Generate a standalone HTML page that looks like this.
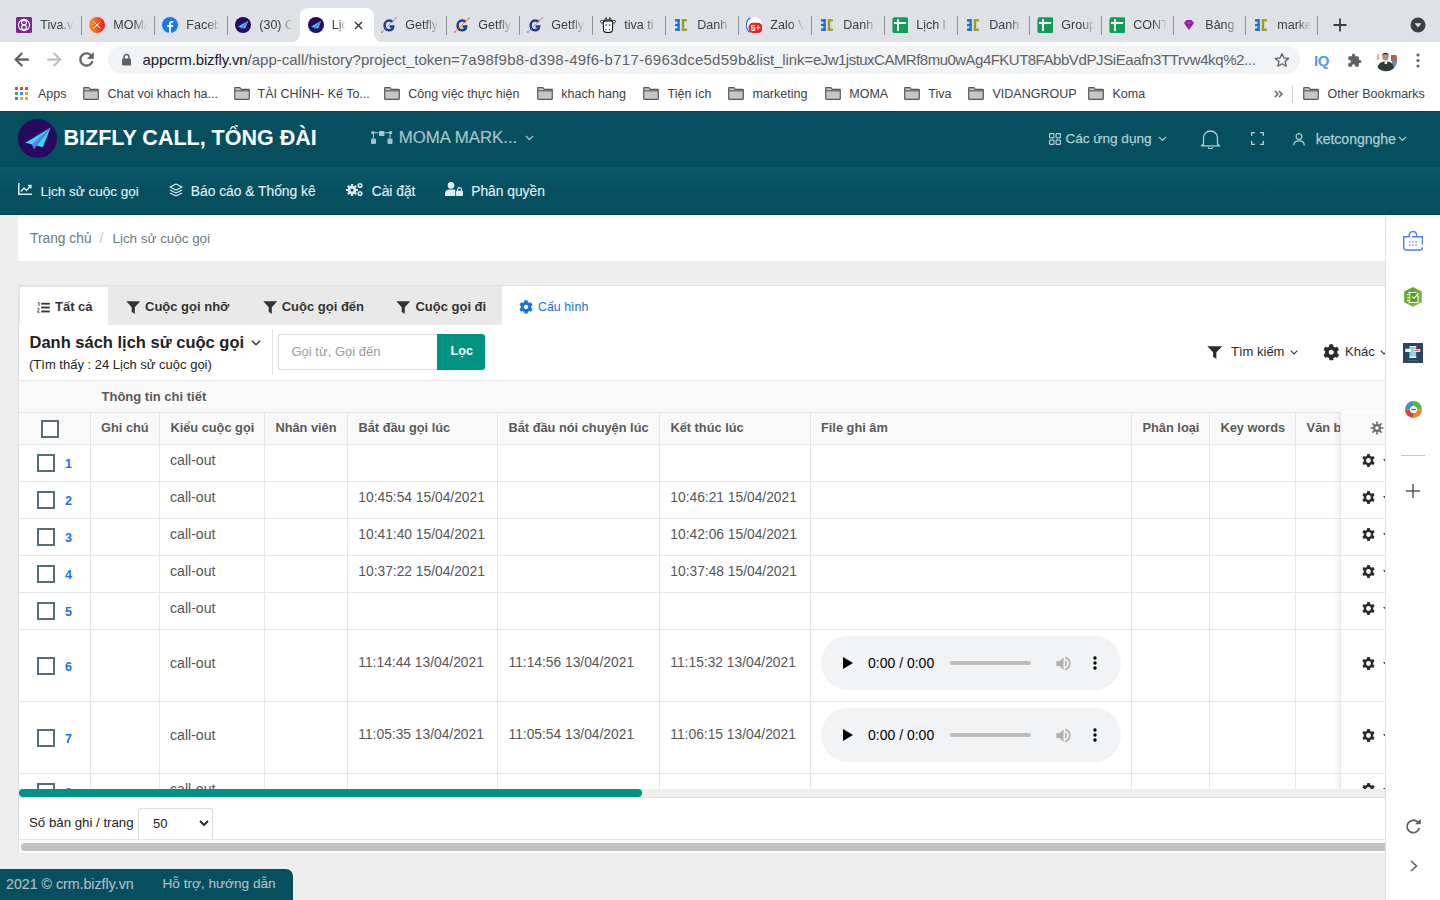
<!DOCTYPE html><html><head><meta charset='utf-8'><title>Lịch sử cuộc gọi</title><style>
*{box-sizing:border-box;margin:0;padding:0}
html,body{width:1440px;height:900px;overflow:hidden;background:#fff;font-family:"Liberation Sans",sans-serif;position:relative}
.abs{position:absolute}
.t{position:absolute;white-space:nowrap;line-height:1}
#tabstrip{position:absolute;left:0;top:0;width:1440px;height:42px;background:#dee1e6}
.tab{position:absolute;top:8px;height:34px;width:73px}
.tab .fav{position:absolute;left:7.6px;top:8.7px;width:16px;height:16px}
.tab .ttl{position:absolute;left:31.8px;top:10px;font-size:12.5px;color:#3c4043;width:34px;overflow:hidden;white-space:nowrap;line-height:15px;
 -webkit-mask-image:linear-gradient(90deg,#000 60%,transparent 100%)}
.tab .sep{position:absolute;right:-0.5px;top:7.5px;width:1px;height:19.5px;background:#8d9094}
#toolbar{position:absolute;left:0;top:42px;width:1440px;height:36px;background:#fff}
#omni{position:absolute;left:108px;top:46px;width:1192px;height:28px;border-radius:14px;background:#f1f3f4}
#bm{position:absolute;left:0;top:78px;width:1440px;height:32px;background:#fff}
.bmi{position:absolute;top:87px;width:16px;height:13px}
.bmt{position:absolute;top:86.7px;font-size:12.5px;color:#3c4043;line-height:15px;white-space:nowrap}
#hdr{position:absolute;left:0;top:111px;width:1440px;height:56px;background:#054f5f;border-top:1px solid #03475a}
#nav{position:absolute;left:0;top:167px;width:1440px;height:48px;background:linear-gradient(180deg,#0f5b69 0px,#0a5666 8px,#054f5f 24px,#054f5f 46px,#03485a 47px)}
.hw{color:#bcd2d6}
#content{position:absolute;left:0;top:215px;width:1386px;height:685px;background:#eeeeee}
#side{position:absolute;left:1385px;top:215px;width:55px;height:685px;background:#fff;border-left:1px solid #e0e0e0}
</style></head><body>
<div id='tabstrip'></div>
<div class='tab' style='left:8.5px;width:73px'><svg class='fav' viewBox='0 0 16 16'><rect width='16' height='16' rx='1.5' fill='#7a2a8e'/><circle cx='8' cy='8' r='5.6' fill='none' stroke='#fff' stroke-width='1.1'/><circle cx='8' cy='5.7' r='2.3' fill='none' stroke='#fff' stroke-width='1.1'/><circle cx='8' cy='10.3' r='2.3' fill='none' stroke='#fff' stroke-width='1.1'/></svg><div class='ttl'>Tiva.v</div><div class='sep'></div></div>
<div class='tab' style='left:81.5px;width:73px'><svg class='fav' viewBox='0 0 16 16'><defs><linearGradient id='mg' x1='0' x2='1'><stop offset='0' stop-color='#f89a1c'/><stop offset='1' stop-color='#ec1c2a'/></linearGradient></defs><circle cx='8' cy='8' r='8' fill='url(#mg)'/><path d='M4.8 4.8 L11.2 11.2 M11.2 4.8 L4.8 11.2' stroke='#fff' stroke-width='1'/></svg><div class='ttl'>MOMA</div><div class='sep'></div></div>
<div class='tab' style='left:154.5px;width:73px'><svg class='fav' viewBox='0 0 16 16'><circle cx='8' cy='8' r='8' fill='#1877f2'/><path d='M8.9 16 V10 H10.8 L11.1 8 H8.9 V6.8 C8.9 6.2 9.1 5.8 10 5.8 H11.2 V4 C10.9 4 10.3 3.9 9.6 3.9 C8 3.9 7 4.9 7 6.6 V8 H5.2 V10 H7 V16 Z' fill='#fff'/></svg><div class='ttl'>Faceb</div><div class='sep'></div></div>
<div class='tab' style='left:227.5px;width:73px'><svg class='fav' viewBox='0 0 39 39'><circle cx='19.5' cy='19.5' r='19.5' fill='#29085f'/><path d='M32.75 8.5 L7.25 23.75 L15.5 25.8 Z' fill='#3ad6f2'/><path d='M32.75 8.5 L18.3 26.6 L24.75 28.25 Z' fill='#3ad6f2'/><path d='M32.75 8.5 L13.6 25.4 L16.6 30.6 L18.4 26.6 Z' fill='#5b7df2'/></svg><div class='ttl'>(30) C</div></div>
<div class='tab' style='left:300px;width:74px;background:#fff;border-radius:8px 8px 0 0'><svg class='fav' viewBox='0 0 39 39'><circle cx='19.5' cy='19.5' r='19.5' fill='#29085f'/><path d='M32.75 8.5 L7.25 23.75 L15.5 25.8 Z' fill='#3ad6f2'/><path d='M32.75 8.5 L18.3 26.6 L24.75 28.25 Z' fill='#3ad6f2'/><path d='M32.75 8.5 L13.6 25.4 L16.6 30.6 L18.4 26.6 Z' fill='#5b7df2'/></svg><div class='ttl' style='width:14px;-webkit-mask-image:linear-gradient(90deg,#000 50%,transparent 100%)'>Lịc</div><svg class='abs' style='left:53.5px;top:13px' width='9' height='9' viewBox='0 0 9 9'><path d='M1 1 L8 8 M8 1 L1 8' stroke='#3c4043' stroke-width='1.5'/></svg></div>
<div class='abs' style='left:292px;top:34px;width:8px;height:8px;background:radial-gradient(circle at 0 0,transparent 7.5px,#fff 8px)'></div>
<div class='abs' style='left:374px;top:34px;width:8px;height:8px;background:radial-gradient(circle at 100% 0,transparent 7.5px,#fff 8px)'></div>
<div class='tab' style='left:373.5px;width:73px'><svg class='fav' viewBox='0 0 16 16'><path d='M11.6 5.2 C10.8 4 9.6 3.6 8.2 3.6 C5.4 3.6 3.6 5.8 3.6 8.6 C3.6 11.4 5.4 13.2 8 13.2 C10.6 13.2 12 11.8 12.2 9.4 H8.6' fill='none' stroke='#1d3f8e' stroke-width='2.5'/><path d='M.6 15.3 L15.3 .8' stroke='#f07a3a' stroke-width='.9'/><circle cx='.9' cy='15' r='.9' fill='#f07a3a'/><circle cx='14.8' cy='1.3' r='.9' fill='#f07a3a'/></svg><div class='ttl'>Getfly</div><div class='sep'></div></div>
<div class='tab' style='left:446.5px;width:73px'><svg class='fav' viewBox='0 0 16 16'><path d='M11.6 5.2 C10.8 4 9.6 3.6 8.2 3.6 C5.4 3.6 3.6 5.8 3.6 8.6 C3.6 11.4 5.4 13.2 8 13.2 C10.6 13.2 12 11.8 12.2 9.4 H8.6' fill='none' stroke='#1d3f8e' stroke-width='2.5'/><path d='M.6 15.3 L15.3 .8' stroke='#f07a3a' stroke-width='.9'/><circle cx='.9' cy='15' r='.9' fill='#f07a3a'/><circle cx='14.8' cy='1.3' r='.9' fill='#f07a3a'/></svg><div class='ttl'>Getfly</div><div class='sep'></div></div>
<div class='tab' style='left:519.5px;width:73px'><svg class='fav' viewBox='0 0 16 16'><path d='M11.6 5.2 C10.8 4 9.6 3.6 8.2 3.6 C5.4 3.6 3.6 5.8 3.6 8.6 C3.6 11.4 5.4 13.2 8 13.2 C10.6 13.2 12 11.8 12.2 9.4 H8.6' fill='none' stroke='#1d3f8e' stroke-width='2.5'/><path d='M.6 15.3 L15.3 .8' stroke='#f07a3a' stroke-width='.9'/><circle cx='.9' cy='15' r='.9' fill='#f07a3a'/><circle cx='14.8' cy='1.3' r='.9' fill='#f07a3a'/></svg><div class='ttl'>Getfly</div><div class='sep'></div></div>
<div class='tab' style='left:592.5px;width:73px'><svg class='fav' viewBox='0 0 16 16'><path d='M5.2 3.5 C5 1.8 5.6 .8 6.3 .6 C6.6 1.6 6.8 2.6 7 3.3 M10.8 3.5 C11 1.8 10.4 .8 9.7 .6 C9.4 1.6 9.2 2.6 9 3.3' fill='#fff' stroke='#111' stroke-width='.9'/><path d='M.3 4.2 C1.5 3 3.5 3.2 4.5 3.8 L3.8 6.2 C2 6.4 .6 5.6 .3 4.2 Z M15.7 4.2 C14.5 3 12.5 3.2 11.5 3.8 L12.2 6.2 C14 6.4 15.4 5.6 15.7 4.2 Z' fill='#fff' stroke='#111' stroke-width='.9'/><path d='M3.2 5 C3.2 3.6 4.5 3 8 3 C11.5 3 12.8 3.6 12.8 5 L12.4 13.4 C12.2 15 11 15.6 8 15.6 C5 15.6 3.8 15 3.6 13.4 Z' fill='#fff' stroke='#111' stroke-width='1.1'/><path d='M3.5 4.4 C5 3.3 11 3.3 12.5 4.4 L12.5 5 C11 4.3 5 4.3 3.5 5 Z' fill='#111'/><rect x='5.6' y='7.4' width='1.3' height='1.3' fill='#111'/><rect x='8.9' y='7.4' width='1.3' height='1.3' fill='#111'/><circle cx='6' cy='12.6' r='.6' fill='#111'/><circle cx='9.6' cy='12.6' r='.6' fill='#111'/></svg><div class='ttl'>tiva ti</div><div class='sep'></div></div>
<div class='tab' style='left:665.5px;width:73px'><svg class='fav' viewBox='0 0 16 16'><g fill='#1670d8'><rect x='2' y='2.2' width='4.7' height='2.4'/><rect x='2' y='6.9' width='4.7' height='2.2'/><rect x='2' y='11.4' width='4.7' height='2.4'/><rect x='4.4' y='2.2' width='2.3' height='11.6'/></g><g fill='#a39a24'><rect x='8.8' y='2.2' width='5.2' height='2.2'/><rect x='8.8' y='11.6' width='5.2' height='2.2'/><rect x='8.8' y='2.2' width='2.4' height='11.6'/></g></svg><div class='ttl'>Danh</div><div class='sep'></div></div>
<div class='tab' style='left:738.5px;width:73px'><svg class='fav' viewBox='0 0 16 16'><rect x='0' y='.3' width='16' height='15.5' rx='6.5' fill='#fff'/><path d='M4.6 .9 C1.4 2.4 .2 5.6 .5 9 C.8 12.4 2.6 14.6 4.2 15.4' fill='none' stroke='#2f6ee8' stroke-width='1.2'/><rect x='2.6' y='5.8' width='13.8' height='10.2' rx='4.4' fill='#dc2a2a'/><text x='9.5' y='14.4' font-size='8.4' font-family='Liberation Sans' font-weight='bold' fill='#fff' text-anchor='middle'>5+</text></svg><div class='ttl'>Zalo V</div><div class='sep'></div></div>
<div class='tab' style='left:811.5px;width:73px'><svg class='fav' viewBox='0 0 16 16'><g fill='#1670d8'><rect x='2' y='2.2' width='4.7' height='2.4'/><rect x='2' y='6.9' width='4.7' height='2.2'/><rect x='2' y='11.4' width='4.7' height='2.4'/><rect x='4.4' y='2.2' width='2.3' height='11.6'/></g><g fill='#a39a24'><rect x='8.8' y='2.2' width='5.2' height='2.2'/><rect x='8.8' y='11.6' width='5.2' height='2.2'/><rect x='8.8' y='2.2' width='2.4' height='11.6'/></g></svg><div class='ttl'>Danh</div><div class='sep'></div></div>
<div class='tab' style='left:884.5px;width:73px'><svg class='fav' viewBox='0 0 16 16'><rect x='.4' y='.2' width='16' height='16' rx='2.2' fill='#0f9d58'/><path d='M2.1 6.1 H14.1 M6 2.3 V14.1' stroke='#fff' stroke-width='2'/></svg><div class='ttl'>Lịch l</div><div class='sep'></div></div>
<div class='tab' style='left:957.5px;width:72px'><svg class='fav' viewBox='0 0 16 16'><g fill='#1670d8'><rect x='2' y='2.2' width='4.7' height='2.4'/><rect x='2' y='6.9' width='4.7' height='2.2'/><rect x='2' y='11.4' width='4.7' height='2.4'/><rect x='4.4' y='2.2' width='2.3' height='11.6'/></g><g fill='#a39a24'><rect x='8.8' y='2.2' width='5.2' height='2.2'/><rect x='8.8' y='11.6' width='5.2' height='2.2'/><rect x='8.8' y='2.2' width='2.4' height='11.6'/></g></svg><div class='ttl'>Danh</div><div class='sep'></div></div>
<div class='tab' style='left:1029.5px;width:72px'><svg class='fav' viewBox='0 0 16 16'><rect x='.4' y='.2' width='16' height='16' rx='2.2' fill='#0f9d58'/><path d='M2.1 6.1 H14.1 M6 2.3 V14.1' stroke='#fff' stroke-width='2'/></svg><div class='ttl'>Group</div><div class='sep'></div></div>
<div class='tab' style='left:1101.5px;width:72px'><svg class='fav' viewBox='0 0 16 16'><rect x='.4' y='.2' width='16' height='16' rx='2.2' fill='#0f9d58'/><path d='M2.1 6.1 H14.1 M6 2.3 V14.1' stroke='#fff' stroke-width='2'/></svg><div class='ttl'>CONT</div><div class='sep'></div></div>
<div class='tab' style='left:1173.5px;width:72px'><svg class='fav' viewBox='0 0 16 16'><path d='M3 6 L5.5 3 H10.5 L13 6 L8 13 Z' fill='#8e1b9e'/><path d='M3 6 H13 M5.5 3 L8 6 L10.5 3 M8 6 L8 13' stroke='#c34fd0' stroke-width='.6' fill='none'/></svg><div class='ttl'>Bảng</div><div class='sep'></div></div>
<div class='tab' style='left:1245.5px;width:72px'><svg class='fav' viewBox='0 0 16 16'><g fill='#1670d8'><rect x='2' y='2.2' width='4.7' height='2.4'/><rect x='2' y='6.9' width='4.7' height='2.2'/><rect x='2' y='11.4' width='4.7' height='2.4'/><rect x='4.4' y='2.2' width='2.3' height='11.6'/></g><g fill='#a39a24'><rect x='8.8' y='2.2' width='5.2' height='2.2'/><rect x='8.8' y='11.6' width='5.2' height='2.2'/><rect x='8.8' y='2.2' width='2.4' height='11.6'/></g></svg><div class='ttl'>marke</div><div class='sep'></div></div>
<svg class='abs' style='left:1333px;top:18px' width='14' height='14' viewBox='0 0 14 14'><path d='M7 0.5 V13.5 M0.5 7 H13.5' stroke='#3c4043' stroke-width='1.8'/></svg>
<svg class='abs' style='left:1410px;top:17px' width='16' height='16' viewBox='0 0 16 16'><circle cx='8' cy='8' r='7.5' fill='#3c4043'/><path d='M4.6 6.3 H11.4 L8 10.4 Z' fill='#dee1e6'/></svg>
<div id='toolbar'></div>
<svg class='abs' style='left:11.4px;top:48.9px' width='21' height='21' viewBox='0 0 24 24'><path d='M20 11H7.83l5.59-5.59L12 4l-8 8 8 8 1.41-1.41L7.83 13H20v-2z' fill='#5f6368' stroke='#5f6368' stroke-width='.7' stroke-linejoin='round'/></svg>
<svg class='abs' style='left:43.5px;top:48.9px' width='21' height='21' viewBox='0 0 24 24'><path d='M12 4l-1.41 1.41L16.17 11H4v2h12.17l-5.58 5.59L12 20l8-8z' fill='#bdc1c6' stroke='#bdc1c6' stroke-width='.7' stroke-linejoin='round'/></svg>
<svg class='abs' style='left:75.5px;top:48.9px' width='21' height='21' viewBox='0 0 24 24'><path stroke='#5f6368' stroke-width='.6' d='M17.65 6.35C16.2 4.9 14.21 4 12 4c-4.42 0-7.99 3.58-7.99 8s3.57 8 7.99 8c3.73 0 6.840-2.55 7.73-6h-2.08c-.82 2.33-3.04 4-5.65 4-3.31 0-6-2.69-6-6s2.69-6 6-6c1.66 0 3.14.69 4.22 1.78L13 11h7V4l-2.35 2.35z' fill='#5f6368'/></svg>
<div id='omni'></div>
<svg class='abs' style='left:122px;top:53px' width='9' height='13' viewBox='0 0 9 13'><path d='M2 6 V4 A2.5 2.5 0 0 1 7 4 V6' fill='none' stroke='#5f6368' stroke-width='1.5'/><rect x='0' y='5.5' width='9' height='7' rx='1' fill='#5f6368'/></svg>
<div class='t' style='left:142.5px;top:51.2px;font-size:15px;line-height:17px;width:1140px;overflow:hidden;color:#5f6368;letter-spacing:-0.14px'><span style='color:#202124'>appcrm.bizfly.vn</span><span style='letter-spacing:0'>/app-call/history?project_token=</span><span style='letter-spacing:.25px'>7a98f9b8-d398-49f6-b717-6963dce5d59b</span>&amp;list_link=<span style='letter-spacing:-.52px'>eJw1jstuxCAMRf8mu0wAg4FKUT8FA</span><span style='letter-spacing:-.385px'>bbVdPJSiEaafn3TTrvw4kq%2...</span></div>
<svg class='abs' style='left:1274px;top:52px' width='16' height='16' viewBox='0 0 24 24'><path d='M12 2.5 L14.9 9 L22 9.6 L16.6 14.3 L18.2 21.3 L12 17.6 L5.8 21.3 L7.4 14.3 L2 9.6 L9.1 9 Z' fill='none' stroke='#5f6368' stroke-width='2' stroke-linejoin='round'/></svg>
<div class='t' style='left:1314px;top:53px;font-size:15px;font-weight:bold;color:#4a9fe0;letter-spacing:-0.5px'>IQ</div>
<svg class='abs' style='left:1347px;top:53px' width='15' height='15' viewBox='0 0 24 24'><path d='M20.5 11H19V7c0-1.1-.9-2-2-2h-4V3.5C13 2.12 11.88 1 10.5 1S8 2.12 8 3.5V5H4c-1.1 0-1.99.9-1.99 2v3.8H3.5c1.49 0 2.7 1.21 2.7 2.7s-1.21 2.7-2.7 2.7H2V20c0 1.1.9 2 2 2h3.8v-1.5c0-1.49 1.21-2.7 2.7-2.7 1.49 0 2.7 1.21 2.7 2.7V22H17c1.1 0 2-.9 2-2v-4h1.5c1.38 0 2.5-1.12 2.5-2.5S21.88 11 20.5 11z' fill='#5f6368'/></svg>
<svg class='abs' style='left:1374px;top:48px' width='24' height='24' viewBox='0 0 24 24'><defs><clipPath id='av'><circle cx='12' cy='12' r='11.2'/></clipPath></defs><g clip-path='url(#av)'><rect width='24' height='24' fill='#fbfbfb'/><rect x='17' y='7' width='6' height='6' fill='#9a6a5c'/><rect x='18' y='13' width='5' height='8' fill='#6f8aa6'/><rect x='3' y='6' width='2' height='6' fill='#cfc08a'/><path d='M3 24 C3 16 6 13.5 12 13.5 C18 13.5 20 16 20 24 Z' fill='#2f3b3a'/><rect x='10.6' y='13' width='2.6' height='3' fill='#e8e8e4'/><ellipse cx='11.5' cy='8.6' rx='3.2' ry='4' fill='#b88d72'/><path d='M8.2 7.4 C8.2 4.4 14.8 4.2 14.8 7.4 C13.5 6 9.5 6 8.2 7.4 Z' fill='#2b2b2b'/></g></svg>
<svg class='abs' style='left:1416px;top:53px' width='4' height='15' viewBox='0 0 4 15'><circle cx='2' cy='2' r='1.6' fill='#5f6368'/><circle cx='2' cy='7.5' r='1.6' fill='#5f6368'/><circle cx='2' cy='13' r='1.6' fill='#5f6368'/></svg>
<div id='bm'></div>
<svg class='abs' style='left:15px;top:87px' width='13' height='13' viewBox='0 0 13 13'><rect x='0' y='0' width='3' height='3' fill='#ea4335'/><rect x='5' y='0' width='3' height='3' fill='#ea4335'/><rect x='10' y='0' width='3' height='3' fill='#ea4335'/><rect x='0' y='5' width='3' height='3' fill='#34a853'/><rect x='5' y='5' width='3' height='3' fill='#4285f4'/><rect x='10' y='5' width='3' height='3' fill='#f4a024'/><rect x='0' y='10' width='3' height='3' fill='#34a853'/><rect x='5' y='10' width='3' height='3' fill='#f4a024'/><rect x='10' y='10' width='3' height='3' fill='#f4a024'/></svg>
<div class='bmt' style='left:38px'>Apps</div>
<svg class='bmi' style='left:83px' viewBox='0 0 16 13'><path d='M0.7 1.2 C0.7 0.9 0.9 0.7 1.2 0.7 H5.8 L7.3 2.3 H14.8 C15.1 2.3 15.3 2.5 15.3 2.8 V11.8 C15.3 12.1 15.1 12.3 14.8 12.3 H1.2 C0.9 12.3 0.7 12.1 0.7 11.8 Z' fill='#c6c6c6' stroke='#5a5a5a' stroke-width='1.2'/><path d='M0.7 3.8 H15.3' stroke='#5a5a5a' stroke-width='1.1'/></svg>
<div class='bmt' style='left:107.5px'>Chat voi khach ha...</div>
<svg class='bmi' style='left:233.75px' viewBox='0 0 16 13'><path d='M0.7 1.2 C0.7 0.9 0.9 0.7 1.2 0.7 H5.8 L7.3 2.3 H14.8 C15.1 2.3 15.3 2.5 15.3 2.8 V11.8 C15.3 12.1 15.1 12.3 14.8 12.3 H1.2 C0.9 12.3 0.7 12.1 0.7 11.8 Z' fill='#c6c6c6' stroke='#5a5a5a' stroke-width='1.2'/><path d='M0.7 3.8 H15.3' stroke='#5a5a5a' stroke-width='1.1'/></svg>
<div class='bmt' style='left:257.5px'>TÀI CHÍNH- Kế To...</div>
<svg class='bmi' style='left:383.75px' viewBox='0 0 16 13'><path d='M0.7 1.2 C0.7 0.9 0.9 0.7 1.2 0.7 H5.8 L7.3 2.3 H14.8 C15.1 2.3 15.3 2.5 15.3 2.8 V11.8 C15.3 12.1 15.1 12.3 14.8 12.3 H1.2 C0.9 12.3 0.7 12.1 0.7 11.8 Z' fill='#c6c6c6' stroke='#5a5a5a' stroke-width='1.2'/><path d='M0.7 3.8 H15.3' stroke='#5a5a5a' stroke-width='1.1'/></svg>
<div class='bmt' style='left:408.25px'>Công việc thực hiện</div>
<svg class='bmi' style='left:537px' viewBox='0 0 16 13'><path d='M0.7 1.2 C0.7 0.9 0.9 0.7 1.2 0.7 H5.8 L7.3 2.3 H14.8 C15.1 2.3 15.3 2.5 15.3 2.8 V11.8 C15.3 12.1 15.1 12.3 14.8 12.3 H1.2 C0.9 12.3 0.7 12.1 0.7 11.8 Z' fill='#c6c6c6' stroke='#5a5a5a' stroke-width='1.2'/><path d='M0.7 3.8 H15.3' stroke='#5a5a5a' stroke-width='1.1'/></svg>
<div class='bmt' style='left:561.25px'>khach hang</div>
<svg class='bmi' style='left:643px' viewBox='0 0 16 13'><path d='M0.7 1.2 C0.7 0.9 0.9 0.7 1.2 0.7 H5.8 L7.3 2.3 H14.8 C15.1 2.3 15.3 2.5 15.3 2.8 V11.8 C15.3 12.1 15.1 12.3 14.8 12.3 H1.2 C0.9 12.3 0.7 12.1 0.7 11.8 Z' fill='#c6c6c6' stroke='#5a5a5a' stroke-width='1.2'/><path d='M0.7 3.8 H15.3' stroke='#5a5a5a' stroke-width='1.1'/></svg>
<div class='bmt' style='left:667.5px'>Tiện ích</div>
<svg class='bmi' style='left:728px' viewBox='0 0 16 13'><path d='M0.7 1.2 C0.7 0.9 0.9 0.7 1.2 0.7 H5.8 L7.3 2.3 H14.8 C15.1 2.3 15.3 2.5 15.3 2.8 V11.8 C15.3 12.1 15.1 12.3 14.8 12.3 H1.2 C0.9 12.3 0.7 12.1 0.7 11.8 Z' fill='#c6c6c6' stroke='#5a5a5a' stroke-width='1.2'/><path d='M0.7 3.8 H15.3' stroke='#5a5a5a' stroke-width='1.1'/></svg>
<div class='bmt' style='left:752.5px'>marketing</div>
<svg class='bmi' style='left:825px' viewBox='0 0 16 13'><path d='M0.7 1.2 C0.7 0.9 0.9 0.7 1.2 0.7 H5.8 L7.3 2.3 H14.8 C15.1 2.3 15.3 2.5 15.3 2.8 V11.8 C15.3 12.1 15.1 12.3 14.8 12.3 H1.2 C0.9 12.3 0.7 12.1 0.7 11.8 Z' fill='#c6c6c6' stroke='#5a5a5a' stroke-width='1.2'/><path d='M0.7 3.8 H15.3' stroke='#5a5a5a' stroke-width='1.1'/></svg>
<div class='bmt' style='left:849.25px'>MOMA</div>
<svg class='bmi' style='left:904.25px' viewBox='0 0 16 13'><path d='M0.7 1.2 C0.7 0.9 0.9 0.7 1.2 0.7 H5.8 L7.3 2.3 H14.8 C15.1 2.3 15.3 2.5 15.3 2.8 V11.8 C15.3 12.1 15.1 12.3 14.8 12.3 H1.2 C0.9 12.3 0.7 12.1 0.7 11.8 Z' fill='#c6c6c6' stroke='#5a5a5a' stroke-width='1.2'/><path d='M0.7 3.8 H15.3' stroke='#5a5a5a' stroke-width='1.1'/></svg>
<div class='bmt' style='left:928.25px'>Tiva</div>
<svg class='bmi' style='left:968.25px' viewBox='0 0 16 13'><path d='M0.7 1.2 C0.7 0.9 0.9 0.7 1.2 0.7 H5.8 L7.3 2.3 H14.8 C15.1 2.3 15.3 2.5 15.3 2.8 V11.8 C15.3 12.1 15.1 12.3 14.8 12.3 H1.2 C0.9 12.3 0.7 12.1 0.7 11.8 Z' fill='#c6c6c6' stroke='#5a5a5a' stroke-width='1.2'/><path d='M0.7 3.8 H15.3' stroke='#5a5a5a' stroke-width='1.1'/></svg>
<div class='bmt' style='left:992.5px'>VIDANGROUP</div>
<svg class='bmi' style='left:1088px' viewBox='0 0 16 13'><path d='M0.7 1.2 C0.7 0.9 0.9 0.7 1.2 0.7 H5.8 L7.3 2.3 H14.8 C15.1 2.3 15.3 2.5 15.3 2.8 V11.8 C15.3 12.1 15.1 12.3 14.8 12.3 H1.2 C0.9 12.3 0.7 12.1 0.7 11.8 Z' fill='#c6c6c6' stroke='#5a5a5a' stroke-width='1.2'/><path d='M0.7 3.8 H15.3' stroke='#5a5a5a' stroke-width='1.1'/></svg>
<div class='bmt' style='left:1112.5px'>Koma</div>
<svg class='bmi' style='left:1303px' viewBox='0 0 16 13'><path d='M0.7 1.2 C0.7 0.9 0.9 0.7 1.2 0.7 H5.8 L7.3 2.3 H14.8 C15.1 2.3 15.3 2.5 15.3 2.8 V11.8 C15.3 12.1 15.1 12.3 14.8 12.3 H1.2 C0.9 12.3 0.7 12.1 0.7 11.8 Z' fill='#c6c6c6' stroke='#5a5a5a' stroke-width='1.2'/><path d='M0.7 3.8 H15.3' stroke='#5a5a5a' stroke-width='1.1'/></svg>
<div class='bmt' style='left:1327.5px'>Other Bookmarks</div>
<svg class='abs' style='left:1274px;top:90px' width='9' height='8' viewBox='0 0 9 8'><path d='M1 1 L4 4 L1 7 M5 1 L8 4 L5 7' fill='none' stroke='#5f6368' stroke-width='1.5'/></svg>
<div class='abs' style='left:1292px;top:86px;width:1px;height:17px;background:#ccc'></div>
<div id='hdr'></div><div id='nav'></div>
<svg class='abs' style='left:18px;top:118.5px' width='39' height='39' viewBox='0 0 39 39'><circle cx='19.5' cy='19.5' r='19.5' fill='#29085f'/><path d='M32.75 8.5 L7.25 23.75 L15.5 25.8 Z' fill='#3ad6f2'/><path d='M32.75 8.5 L18.3 26.6 L24.75 28.25 Z' fill='#3ad6f2'/><path d='M32.75 8.5 L13.6 25.4 L16.6 30.6 L18.4 26.6 Z' fill='#5b7df2'/></svg>
<div class='t' style='left:63.5px;top:125.8px;font-size:21.5px;font-weight:bold;color:#fff;line-height:24px'>BIZFLY CALL, TỔNG ĐÀI</div>
<svg class='abs' style='left:370.5px;top:131px' width='22' height='13' viewBox='0 0 22 13'><g fill='#a9c4c9'><rect x='0' y='7.5' width='5' height='5.5' rx='1'/><rect x='16.5' y='7.5' width='5' height='5.5' rx='1'/><rect x='8' y='0' width='5.5' height='5' rx='1'/><circle cx='2' cy='1.8' r='1.8'/><circle cx='19.5' cy='1.8' r='1.8'/></g><path d='M3.5 1.8 H7.5 M14 1.8 H18 M2.5 3.5 V7 M19 3.5 V7' stroke='#a9c4c9' stroke-width='1.1' fill='none'/></svg>
<div class='t' style='left:398.8px;top:128px;font-size:16.8px;color:#a9c4c9;line-height:19px;-webkit-text-stroke:.2px #a9c4c9'>MOMA MARK...</div>
<svg class='abs' style='left:525px;top:135px' width='9' height='6' viewBox='0 0 9 6'><path d='M1 1 L4.5 4.5 L8 1' fill='none' stroke='#a9c4c9' stroke-width='1.3'/></svg>
<svg class='abs' style='left:1048.5px;top:133px' width='12' height='12' viewBox='0 0 12 12'><g fill='none' stroke='#b3cdd1' stroke-width='1.2'><rect x='.6' y='.6' width='4.3' height='4.3' rx='.6'/><rect x='7.1' y='.6' width='4.3' height='4.3' rx='.6'/><rect x='.6' y='7.1' width='4.3' height='4.3' rx='.6'/><rect x='7.1' y='7.1' width='4.3' height='4.3' rx='.6'/></g></svg>
<div class='t' style='left:1065.4px;top:131px;font-size:13.6px;color:#b3cdd1;line-height:16px;-webkit-text-stroke:.25px #b3cdd1'>Các ứng dụng</div>
<svg class='abs' style='left:1158px;top:136px' width='9' height='6' viewBox='0 0 9 6'><path d='M1 1 L4.5 4.5 L8 1' fill='none' stroke='#b3cdd1' stroke-width='1.2'/></svg>
<svg class='abs' style='left:1199.5px;top:129px' width='21' height='20' viewBox='0 0 21 20'><path d='M3.5 15.2 V9 A7 7 0 0 1 17.5 9 V15.2 L19.6 16.8 H1.4 Z' fill='none' stroke='#b3cdd1' stroke-width='1.3' stroke-linejoin='round'/><path d='M8.5 18.2 A2 1.6 0 0 0 12.5 18.2' fill='none' stroke='#b3cdd1' stroke-width='1.3'/></svg>
<svg class='abs' style='left:1251px;top:131.5px' width='13' height='13' viewBox='0 0 13 13'><path d='M.7 4 V.7 H4 M9 .7 H12.3 V4 M12.3 9 V12.3 H9 M4 12.3 H.7 V9' fill='none' stroke='#b3cdd1' stroke-width='1.3'/></svg>
<svg class='abs' style='left:1292.5px;top:132.5px' width='12' height='13' viewBox='0 0 12 13'><circle cx='6' cy='3.5' r='2.9' fill='none' stroke='#b3cdd1' stroke-width='1.2'/><path d='M.7 12.6 C.7 9 3 7.8 6 7.8 C9 7.8 11.3 9 11.3 12.6' fill='none' stroke='#b3cdd1' stroke-width='1.2'/></svg>
<div class='t' style='left:1315.7px;top:131px;font-size:14px;color:#b3cdd1;line-height:16px;-webkit-text-stroke:.25px #b3cdd1'>ketcongnghe</div>
<svg class='abs' style='left:1398px;top:136px' width='9' height='6' viewBox='0 0 9 6'><path d='M1 1 L4.5 4.5 L8 1' fill='none' stroke='#b3cdd1' stroke-width='1.2'/></svg>
<svg class='abs' style='left:17.5px;top:183px' width='14' height='12' viewBox='0 0 14 12'><path d='M.8 0 V11.2 H14' fill='none' stroke='#dfeaec' stroke-width='1.5'/><path d='M3 8.5 L6 5 L8.5 7.5 L12.5 3' fill='none' stroke='#dfeaec' stroke-width='1.5'/><path d='M10 2.5 H13 V5.5' fill='none' stroke='#dfeaec' stroke-width='1.4'/></svg>
<div class='t' style='left:40.4px;top:183.5px;font-size:13.5px;color:#dfeaec;line-height:16px;-webkit-text-stroke:.2px #dfeaec'>Lịch sử cuộc gọi</div>
<svg class='abs' style='left:168.5px;top:182.5px' width='14' height='14' viewBox='0 0 14 14'><g fill='none' stroke='#dfeaec' stroke-width='1.2' stroke-linejoin='round'><path d='M7 1 L13 4 L7 7 L1 4 Z'/><path d='M1 7 L7 10 L13 7'/><path d='M1 10 L7 13 L13 10'/></g></svg>
<div class='t' style='left:190.8px;top:183.5px;font-size:13.8px;color:#dfeaec;line-height:16px;-webkit-text-stroke:.2px #dfeaec'>Báo cáo &amp; Thống kê</div>
<svg class='abs' style='left:345.5px;top:182px' width='18' height='15' viewBox='0 0 18 15'><g fill='#dfeaec'><circle cx='6' cy='8' r='4.3'/><g stroke='#dfeaec' stroke-width='2.2'><path d='M6 2 V14 M0 8 H12 M1.8 3.8 L10.2 12.2 M10.2 3.8 L1.8 12.2'/></g><circle cx='14' cy='3.5' r='2.6'/><circle cx='14' cy='11.5' r='2.6'/></g><circle cx='6' cy='8' r='1.6' fill='#06505f'/><circle cx='14' cy='3.5' r='1' fill='#06505f'/><circle cx='14' cy='11.5' r='1' fill='#06505f'/></svg>
<div class='t' style='left:371.7px;top:183.5px;font-size:13.8px;color:#dfeaec;line-height:16px;-webkit-text-stroke:.2px #dfeaec'>Cài đặt</div>
<svg class='abs' style='left:445px;top:182px' width='18' height='14' viewBox='0 0 18 14'><g fill='#dfeaec'><circle cx='6' cy='3.4' r='3.3'/><path d='M0 14 V11.5 C0 9 2 7.6 4.5 7.6 H8.5 C9.2 7.6 9.8 7.7 10.3 8 V14 Z'/><rect x='11' y='8.8' width='7' height='5.2' rx='.8'/></g><path d='M12.6 9 V7.6 A1.9 1.9 0 0 1 16.4 7.6 V9' fill='none' stroke='#dfeaec' stroke-width='1.2'/></svg>
<div class='t' style='left:471.2px;top:183.5px;font-size:13.8px;color:#dfeaec;line-height:16px;-webkit-text-stroke:.2px #dfeaec'>Phân quyền</div>
<div id='content'></div>
<div class='abs' style='left:18px;top:215px;width:1368px;height:45.5px;background:#fff;border-radius:0 0 0 3px'></div>
<div class='t' style='left:30px;top:231px;font-size:13.8px;color:#6c7a80;line-height:16px'>Trang chủ</div>
<div class='t' style='left:99.5px;top:231px;font-size:13.8px;color:#c3c9cc;line-height:16px'>/</div>
<div class='t' style='left:112.5px;top:231px;font-size:13.4px;color:#6c7a80;line-height:16px'>Lịch sử cuộc gọi</div>
<div class='abs' style='left:18px;top:285px;width:1368px;height:568px;background:#fff;border:1px solid #dedede;border-right:none'></div>
<div class='abs' style='left:19px;top:286px;width:483px;height:38.5px;background:#e9e9e9'></div>
<div class='abs' style='left:20px;top:287px;width:88px;height:38px;background:#fff;border-radius:3px 3px 0 0'></div>
<svg class='abs' style='left:36.5px;top:301.5px' width='13' height='11' viewBox='0 0 13 11'><path d='M1.2 .6 L2 .2 V4' stroke='#333' stroke-width='.9' fill='none'/><path d='M.4 7 C.6 6 2.4 6 2.2 7.2 L.4 10.2 H2.6' stroke='#333' stroke-width='.9' fill='none'/><rect x='4.2' y='.8' width='8.6' height='1.8' fill='#333'/><rect x='4.2' y='4.6' width='8.6' height='1.8' fill='#333'/><rect x='4.2' y='8.6' width='8.6' height='1.8' fill='#333'/></svg>
<div class='t' style='left:55px;top:299px;font-size:13px;font-weight:bold;color:#333;line-height:15px'>Tất cả</div>
<svg class='abs' style='left:125.8px;top:301px' width='14.5' height='13' viewBox='0 0 14.5 13'><path d='M.3 .3 H14.2 L8.8 6.2 V12.7 L5.7 11 V6.2 Z' fill='#333'/></svg>
<div class='t' style='left:145px;top:299px;font-size:13px;font-weight:bold;color:#333;line-height:15px'>Cuộc gọi nhỡ</div>
<svg class='abs' style='left:262.5px;top:301px' width='14.5' height='13' viewBox='0 0 14.5 13'><path d='M.3 .3 H14.2 L8.8 6.2 V12.7 L5.7 11 V6.2 Z' fill='#333'/></svg>
<div class='t' style='left:281.7px;top:299px;font-size:13px;font-weight:bold;color:#333;line-height:15px'>Cuộc gọi đến</div>
<svg class='abs' style='left:395.8px;top:301px' width='14.5' height='13' viewBox='0 0 14.5 13'><path d='M.3 .3 H14.2 L8.8 6.2 V12.7 L5.7 11 V6.2 Z' fill='#333'/></svg>
<div class='t' style='left:415.4px;top:299px;font-size:13px;font-weight:bold;color:#333;line-height:15px'>Cuộc gọi đi</div>
<svg class='abs' style='left:519px;top:300px' width='14' height='14' viewBox='0 0 512 512'><path fill='#1a73d2' d='M487.4 315.7l-42.6-24.6c4.3-23.2 4.3-47 0-70.2l42.6-24.6c4.9-2.8 7.1-8.6 5.5-14-11.1-35.6-30-67.8-54.7-94.6-3.8-4.1-10-5.1-14.8-2.3L380.8 110c-17.9-15.4-38.5-27.3-60.8-35.1V25.8c0-5.6-3.9-10.5-9.4-11.7-36.7-8.2-74.3-7.8-109.2 0-5.5 1.2-9.4 6.1-9.4 11.7V75c-22.2 7.9-42.8 19.8-60.8 35.1L88.7 85.5c-4.9-2.8-11-1.9-14.8 2.3-24.7 26.7-43.6 58.9-54.7 94.6-1.7 5.4.6 11.2 5.5 14L67.3 221c-4.3 23.2-4.3 47 0 70.2l-42.6 24.6c-4.9 2.8-7.1 8.6-5.5 14 11.1 35.6 30 67.8 54.7 94.6 3.8 4.1 10 5.1 14.8 2.3l42.6-24.6c17.9 15.4 38.5 27.3 60.8 35.1v49.2c0 5.6 3.9 10.5 9.4 11.7 36.7 8.2 74.3 7.8 109.2 0 5.5-1.2 9.4-6.1 9.4-11.7v-49.2c22.2-7.9 42.8-19.8 60.8-35.1l42.6 24.6c4.9 2.8 11 1.9 14.8-2.3 24.7-26.7 43.6-58.9 54.7-94.6 1.5-5.5-.7-11.3-5.6-14.1zM256 336c-44.1 0-80-35.9-80-80s35.9-80 80-80 80 35.9 80 80-35.9 80-80 80z'/></svg>
<div class='t' style='left:538px;top:299.5px;font-size:12.4px;color:#1a73d2;line-height:15px'>Cấu hình</div>
<div class='t' style='left:29.5px;top:333px;font-size:16.5px;font-weight:bold;color:#222;line-height:19px'>Danh sách lịch sử cuộc gọi</div>
<svg class='abs' style='left:250.5px;top:340px' width='10' height='6' viewBox='0 0 10 6'><path d='M1 .8 L5 4.8 L9 .8' fill='none' stroke='#333' stroke-width='1.5'/></svg>
<div class='t' style='left:29px;top:357px;font-size:13px;color:#222;line-height:15px'>(Tìm thấy : 24 Lịch sử cuộc gọi)</div>
<div class='abs' style='left:272px;top:329px;width:1px;height:46px;background:#e3e3e3'></div>
<div class='abs' style='left:278px;top:334px;width:160px;height:36px;border:1px solid #d9d9d9;border-right:none;border-radius:3px 0 0 3px;background:#fff'></div>
<div class='t' style='left:291.5px;top:344px;font-size:13px;color:#9a9a9a;line-height:15px'>Gọi từ, Gọi đến</div>
<div class='abs' style='left:437px;top:334px;width:48px;height:36px;background:#009384;border-radius:0 3px 3px 0'></div>
<div class='t' style='left:450.5px;top:344.3px;font-size:12.6px;font-weight:bold;color:#fff;line-height:15px'>Lọc</div>
<svg class='abs' style='left:1206.5px;top:345.5px' width='15.5' height='13' viewBox='0 0 15.5 13'><path d='M.3 .3 H15.2 L9.4 6.3 V12.7 L6.1 11 V6.3 Z' fill='#2b2b2b'/></svg>
<div class='t' style='left:1231px;top:343.5px;font-size:13px;color:#2b2b2b;line-height:15px'>Tìm kiếm</div>
<svg class='abs' style='left:1289.5px;top:349.5px' width='8' height='5' viewBox='0 0 8 5'><path d='M.7 .7 L4 4 L7.3 .7' fill='none' stroke='#333' stroke-width='1.1'/></svg>
<svg class='abs' style='left:1323px;top:344px' width='16.5' height='16.5' viewBox='0 0 512 512'><path fill='#2b2b2b' d='M487.4 315.7l-42.6-24.6c4.3-23.2 4.3-47 0-70.2l42.6-24.6c4.9-2.8 7.1-8.6 5.5-14-11.1-35.6-30-67.8-54.7-94.6-3.8-4.1-10-5.1-14.8-2.3L380.8 110c-17.9-15.4-38.5-27.3-60.8-35.1V25.8c0-5.6-3.9-10.5-9.4-11.7-36.7-8.2-74.3-7.8-109.2 0-5.5 1.2-9.4 6.1-9.4 11.7V75c-22.2 7.9-42.8 19.8-60.8 35.1L88.7 85.5c-4.9-2.8-11-1.9-14.8 2.3-24.7 26.7-43.6 58.9-54.7 94.6-1.7 5.4.6 11.2 5.5 14L67.3 221c-4.3 23.2-4.3 47 0 70.2l-42.6 24.6c-4.9 2.8-7.1 8.6-5.5 14 11.1 35.6 30 67.8 54.7 94.6 3.8 4.1 10 5.1 14.8 2.3l42.6-24.6c17.9 15.4 38.5 27.3 60.8 35.1v49.2c0 5.6 3.9 10.5 9.4 11.7 36.7 8.2 74.3 7.8 109.2 0 5.5-1.2 9.4-6.1 9.4-11.7v-49.2c22.2-7.9 42.8-19.8 60.8-35.1l42.6 24.6c4.9 2.8 11 1.9 14.8-2.3 24.7-26.7 43.6-58.9 54.7-94.6 1.5-5.5-.7-11.3-5.6-14.1zM256 336c-44.1 0-80-35.9-80-80s35.9-80 80-80 80 35.9 80 80-35.9 80-80 80z'/></svg>
<div class='t' style='left:1345px;top:343.5px;font-size:13px;color:#2b2b2b;line-height:15px'>Khác</div>
<svg class='abs' style='left:1379.5px;top:349.5px' width='8' height='5' viewBox='0 0 8 5'><path d='M.7 .7 L4 4 L7.3 .7' fill='none' stroke='#333' stroke-width='1.1'/></svg>
<div class='abs' style='left:19px;top:380px;width:1367px;height:1px;background:#e6e6e6'></div>
<div class='abs' style='left:0;top:0;width:1440px;height:789px;overflow:hidden'>
<div class='abs' style='left:19px;top:381px;width:1367px;height:63px;background:#f9f9f9'></div>
<div class='t' style='left:101.5px;top:388.7px;font-size:13px;font-weight:bold;color:#5a5a5a;line-height:15px'>Thông tin chi tiết</div>
<div class='abs' style='left:19px;top:412px;width:1367px;height:1px;background:#e4e6e8'></div>
<div class='abs' style='left:19px;top:444px;width:1367px;height:1px;background:#e4e6e8'></div>
<div class='abs' style='left:90px;top:412px;width:1px;height:377px;background:#e4e6e8'></div>
<div class='abs' style='left:159px;top:412px;width:1px;height:377px;background:#e4e6e8'></div>
<div class='abs' style='left:264px;top:412px;width:1px;height:377px;background:#e4e6e8'></div>
<div class='abs' style='left:347px;top:412px;width:1px;height:377px;background:#e4e6e8'></div>
<div class='abs' style='left:497px;top:412px;width:1px;height:377px;background:#e4e6e8'></div>
<div class='abs' style='left:659px;top:412px;width:1px;height:377px;background:#e4e6e8'></div>
<div class='abs' style='left:810px;top:412px;width:1px;height:377px;background:#e4e6e8'></div>
<div class='abs' style='left:1131px;top:412px;width:1px;height:377px;background:#e4e6e8'></div>
<div class='abs' style='left:1209px;top:412px;width:1px;height:377px;background:#e4e6e8'></div>
<div class='abs' style='left:1295px;top:412px;width:1px;height:377px;background:#e4e6e8'></div>
<div class='t' style='left:101px;top:420px;font-size:12.8px;font-weight:bold;color:#5a5a5a;line-height:15px'>Ghi chú</div>
<div class='t' style='left:170.4px;top:420px;font-size:12.8px;font-weight:bold;color:#5a5a5a;line-height:15px'>Kiểu cuộc gọi</div>
<div class='t' style='left:275.4px;top:420px;font-size:12.8px;font-weight:bold;color:#5a5a5a;line-height:15px'>Nhân viên</div>
<div class='t' style='left:358.5px;top:420px;font-size:12.8px;font-weight:bold;color:#5a5a5a;line-height:15px'>Bắt đầu gọi lúc</div>
<div class='t' style='left:508.5px;top:420px;font-size:12.8px;font-weight:bold;color:#5a5a5a;line-height:15px'>Bắt đầu nói chuyện lúc</div>
<div class='t' style='left:670.4px;top:420px;font-size:12.8px;font-weight:bold;color:#5a5a5a;line-height:15px'>Kết thúc lúc</div>
<div class='t' style='left:821px;top:420px;font-size:12.8px;font-weight:bold;color:#5a5a5a;line-height:15px'>File ghi âm</div>
<div class='t' style='left:1142.5px;top:420px;font-size:12.8px;font-weight:bold;color:#5a5a5a;line-height:15px'>Phân loại</div>
<div class='t' style='left:1220.4px;top:420px;font-size:12.8px;font-weight:bold;color:#5a5a5a;line-height:15px'>Key words</div>
<div class='t' style='left:1306.6px;top:420px;font-size:12.8px;font-weight:bold;color:#5a5a5a;line-height:15px'>Văn bản</div>
<div class='abs' style='left:41px;top:420px;width:18px;height:18px;border:2px solid #546e7a;background:#fff'></div>
<div class='abs' style='left:19px;top:481px;width:1367px;height:1px;background:#e4e6e8'></div>
<div class='abs' style='left:37px;top:454.0px;width:18px;height:18px;border:2px solid #546e7a;background:#fff'></div>
<div class='t' style='left:65px;top:457.4px;font-size:12.5px;font-weight:bold;color:#1a73e8;line-height:15px'>1</div>
<div class='t' style='left:170px;top:452.3px;font-size:14.1px;color:#555;line-height:16px'>call-out</div>
<div class='abs' style='left:19px;top:518px;width:1367px;height:1px;background:#e4e6e8'></div>
<div class='abs' style='left:37px;top:491.0px;width:18px;height:18px;border:2px solid #546e7a;background:#fff'></div>
<div class='t' style='left:65px;top:494.4px;font-size:12.5px;font-weight:bold;color:#1a73e8;line-height:15px'>2</div>
<div class='t' style='left:170px;top:489.3px;font-size:14.1px;color:#555;line-height:16px'>call-out</div>
<div class='t' style='left:358.3px;top:489.5px;font-size:13.8px;color:#555;line-height:16px'>10:45:54 15/04/2021</div>
<div class='t' style='left:670.3px;top:489.5px;font-size:13.8px;color:#555;line-height:16px'>10:46:21 15/04/2021</div>
<div class='abs' style='left:19px;top:555px;width:1367px;height:1px;background:#e4e6e8'></div>
<div class='abs' style='left:37px;top:528.0px;width:18px;height:18px;border:2px solid #546e7a;background:#fff'></div>
<div class='t' style='left:65px;top:531.4px;font-size:12.5px;font-weight:bold;color:#1a73e8;line-height:15px'>3</div>
<div class='t' style='left:170px;top:526.3px;font-size:14.1px;color:#555;line-height:16px'>call-out</div>
<div class='t' style='left:358.3px;top:526.5px;font-size:13.8px;color:#555;line-height:16px'>10:41:40 15/04/2021</div>
<div class='t' style='left:670.3px;top:526.5px;font-size:13.8px;color:#555;line-height:16px'>10:42:06 15/04/2021</div>
<div class='abs' style='left:19px;top:592px;width:1367px;height:1px;background:#e4e6e8'></div>
<div class='abs' style='left:37px;top:565.0px;width:18px;height:18px;border:2px solid #546e7a;background:#fff'></div>
<div class='t' style='left:65px;top:568.4px;font-size:12.5px;font-weight:bold;color:#1a73e8;line-height:15px'>4</div>
<div class='t' style='left:170px;top:563.3px;font-size:14.1px;color:#555;line-height:16px'>call-out</div>
<div class='t' style='left:358.3px;top:563.5px;font-size:13.8px;color:#555;line-height:16px'>10:37:22 15/04/2021</div>
<div class='t' style='left:670.3px;top:563.5px;font-size:13.8px;color:#555;line-height:16px'>10:37:48 15/04/2021</div>
<div class='abs' style='left:19px;top:629px;width:1367px;height:1px;background:#e4e6e8'></div>
<div class='abs' style='left:37px;top:602.0px;width:18px;height:18px;border:2px solid #546e7a;background:#fff'></div>
<div class='t' style='left:65px;top:605.4px;font-size:12.5px;font-weight:bold;color:#1a73e8;line-height:15px'>5</div>
<div class='t' style='left:170px;top:600.3px;font-size:14.1px;color:#555;line-height:16px'>call-out</div>
<div class='abs' style='left:19px;top:701px;width:1367px;height:1px;background:#e4e6e8'></div>
<div class='abs' style='left:37px;top:656.5px;width:18px;height:18px;border:2px solid #546e7a;background:#fff'></div>
<div class='t' style='left:65px;top:659.9px;font-size:12.5px;font-weight:bold;color:#1a73e8;line-height:15px'>6</div>
<div class='t' style='left:170px;top:654.8px;font-size:14.1px;color:#555;line-height:16px'>call-out</div>
<div class='t' style='left:358.3px;top:655.0px;font-size:13.8px;color:#555;line-height:16px'>11:14:44 13/04/2021</div>
<div class='t' style='left:508.5px;top:655.0px;font-size:13.8px;color:#555;line-height:16px'>11:14:56 13/04/2021</div>
<div class='t' style='left:670.3px;top:655.0px;font-size:13.8px;color:#555;line-height:16px'>11:15:32 13/04/2021</div>
<div class='abs' style='left:821px;top:636px;width:300px;height:54px;border-radius:27px;background:#f1f3f4'></div>
<svg class='abs' style='left:843px;top:657px' width='10' height='12' viewBox='0 0 10 12'><path d='M0 0 L10 6 L0 12 Z' fill='#000'/></svg>
<div class='t' style='left:868px;top:655px;font-size:14px;color:#000;line-height:16px'>0:00 / 0:00</div>
<div class='abs' style='left:950px;top:661px;width:81px;height:4px;border-radius:2px;background:#bdbdbd'></div>
<svg class='abs' style='left:1053.5px;top:653.5px' width='19' height='19' viewBox='0 0 24 24'><path d='M3 9v6h4l5 5V4L7 9H3zm13.5 3c0-1.77-1.02-3.29-2.5-4.03v8.05c1.48-.73 2.5-2.25 2.5-4.02zM14 3.23v2.06c2.89.86 5 3.54 5 6.71s-2.11 5.85-5 6.71v2.06c4.01-.91 7-4.49 7-8.77s-2.99-7.86-7-8.77z' fill='#b0b0b0'/></svg>
<svg class='abs' style='left:1093px;top:656px' width='4' height='14' viewBox='0 0 4 14'><circle cx='2' cy='2' r='1.7' fill='#000'/><circle cx='2' cy='7' r='1.7' fill='#000'/><circle cx='2' cy='12' r='1.7' fill='#000'/></svg>
<div class='abs' style='left:19px;top:773px;width:1367px;height:1px;background:#e4e6e8'></div>
<div class='abs' style='left:37px;top:728.5px;width:18px;height:18px;border:2px solid #546e7a;background:#fff'></div>
<div class='t' style='left:65px;top:731.9px;font-size:12.5px;font-weight:bold;color:#1a73e8;line-height:15px'>7</div>
<div class='t' style='left:170px;top:726.8px;font-size:14.1px;color:#555;line-height:16px'>call-out</div>
<div class='t' style='left:358.3px;top:727.0px;font-size:13.8px;color:#555;line-height:16px'>11:05:35 13/04/2021</div>
<div class='t' style='left:508.5px;top:727.0px;font-size:13.8px;color:#555;line-height:16px'>11:05:54 13/04/2021</div>
<div class='t' style='left:670.3px;top:727.0px;font-size:13.8px;color:#555;line-height:16px'>11:06:15 13/04/2021</div>
<div class='abs' style='left:821px;top:708px;width:300px;height:54px;border-radius:27px;background:#f1f3f4'></div>
<svg class='abs' style='left:843px;top:729px' width='10' height='12' viewBox='0 0 10 12'><path d='M0 0 L10 6 L0 12 Z' fill='#000'/></svg>
<div class='t' style='left:868px;top:727px;font-size:14px;color:#000;line-height:16px'>0:00 / 0:00</div>
<div class='abs' style='left:950px;top:733px;width:81px;height:4px;border-radius:2px;background:#bdbdbd'></div>
<svg class='abs' style='left:1053.5px;top:725.5px' width='19' height='19' viewBox='0 0 24 24'><path d='M3 9v6h4l5 5V4L7 9H3zm13.5 3c0-1.77-1.02-3.29-2.5-4.03v8.05c1.48-.73 2.5-2.25 2.5-4.02zM14 3.23v2.06c2.89.86 5 3.54 5 6.71s-2.11 5.85-5 6.71v2.06c4.01-.91 7-4.49 7-8.77s-2.99-7.86-7-8.77z' fill='#b0b0b0'/></svg>
<svg class='abs' style='left:1093px;top:728px' width='4' height='14' viewBox='0 0 4 14'><circle cx='2' cy='2' r='1.7' fill='#000'/><circle cx='2' cy='7' r='1.7' fill='#000'/><circle cx='2' cy='12' r='1.7' fill='#000'/></svg>
<div class='abs' style='left:37px;top:783.0px;width:18px;height:18px;border:2px solid #546e7a;background:#fff'></div>
<div class='t' style='left:65px;top:786.4px;font-size:12.5px;font-weight:bold;color:#1a73e8;line-height:15px'>8</div>
<div class='t' style='left:170px;top:781.3px;font-size:14.1px;color:#555;line-height:16px'>call-out</div>
<div class='abs' style='left:1334px;top:412px;width:6px;height:377px;background:linear-gradient(90deg,rgba(0,0,0,0),rgba(0,0,0,.05))'></div>
<div class='abs' style='left:1340px;top:412px;width:46px;height:377px;background:#fff;border-left:1px solid #e4e6e8'></div>
<div class='abs' style='left:1341px;top:413px;width:45px;height:31px;background:#f9f9f9'></div>
<div class='abs' style='left:1340px;top:444px;width:46px;height:1px;background:#e4e6e8'></div>
<div class='abs' style='left:1340px;top:481px;width:46px;height:1px;background:#e4e6e8'></div>
<div class='abs' style='left:1340px;top:518px;width:46px;height:1px;background:#e4e6e8'></div>
<div class='abs' style='left:1340px;top:555px;width:46px;height:1px;background:#e4e6e8'></div>
<div class='abs' style='left:1340px;top:592px;width:46px;height:1px;background:#e4e6e8'></div>
<div class='abs' style='left:1340px;top:629px;width:46px;height:1px;background:#e4e6e8'></div>
<div class='abs' style='left:1340px;top:701px;width:46px;height:1px;background:#e4e6e8'></div>
<div class='abs' style='left:1340px;top:773px;width:46px;height:1px;background:#e4e6e8'></div>
<svg class='abs' style='left:1370px;top:420.8px' width='14' height='14' viewBox='0 0 14 14'><g stroke='#6e6e6e' stroke-width='1.6'><path d='M7 .5 V13.5 M.5 7 H13.5 M2.4 2.4 L11.6 11.6 M11.6 2.4 L2.4 11.6'/></g><circle cx='7' cy='7' r='4' fill='#6e6e6e'/><circle cx='7' cy='7' r='1.8' fill='#f9f9f9'/></svg>
<svg class='abs' style='left:1362px;top:454.0px' width='13' height='13' viewBox='0 0 13 13'><path fill='#2b2b2b' fill-rule='evenodd' d='M5.3 0 H7.7 L8.1 1.8 L9.6 2.7 L11.4 2.1 L12.6 4.2 L11.2 5.4 V7.6 L12.6 8.8 L11.4 10.9 L9.6 10.3 L8.1 11.2 L7.7 13 H5.3 L4.9 11.2 L3.4 10.3 L1.6 10.9 L.4 8.8 L1.8 7.6 V5.4 L.4 4.2 L1.6 2.1 L3.4 2.7 L4.9 1.8 Z M6.5 4.1 A2.4 2.4 0 1 0 6.5 8.9 A2.4 2.4 0 1 0 6.5 4.1 Z'/></svg>
<svg class='abs' style='left:1382.5px;top:459.0px' width='4' height='3' viewBox='0 0 4 3'><path d='M0 0 H4 L2 2.5 Z' fill='#444'/></svg>
<svg class='abs' style='left:1362px;top:491.0px' width='13' height='13' viewBox='0 0 13 13'><path fill='#2b2b2b' fill-rule='evenodd' d='M5.3 0 H7.7 L8.1 1.8 L9.6 2.7 L11.4 2.1 L12.6 4.2 L11.2 5.4 V7.6 L12.6 8.8 L11.4 10.9 L9.6 10.3 L8.1 11.2 L7.7 13 H5.3 L4.9 11.2 L3.4 10.3 L1.6 10.9 L.4 8.8 L1.8 7.6 V5.4 L.4 4.2 L1.6 2.1 L3.4 2.7 L4.9 1.8 Z M6.5 4.1 A2.4 2.4 0 1 0 6.5 8.9 A2.4 2.4 0 1 0 6.5 4.1 Z'/></svg>
<svg class='abs' style='left:1382.5px;top:496.0px' width='4' height='3' viewBox='0 0 4 3'><path d='M0 0 H4 L2 2.5 Z' fill='#444'/></svg>
<svg class='abs' style='left:1362px;top:528.0px' width='13' height='13' viewBox='0 0 13 13'><path fill='#2b2b2b' fill-rule='evenodd' d='M5.3 0 H7.7 L8.1 1.8 L9.6 2.7 L11.4 2.1 L12.6 4.2 L11.2 5.4 V7.6 L12.6 8.8 L11.4 10.9 L9.6 10.3 L8.1 11.2 L7.7 13 H5.3 L4.9 11.2 L3.4 10.3 L1.6 10.9 L.4 8.8 L1.8 7.6 V5.4 L.4 4.2 L1.6 2.1 L3.4 2.7 L4.9 1.8 Z M6.5 4.1 A2.4 2.4 0 1 0 6.5 8.9 A2.4 2.4 0 1 0 6.5 4.1 Z'/></svg>
<svg class='abs' style='left:1382.5px;top:533.0px' width='4' height='3' viewBox='0 0 4 3'><path d='M0 0 H4 L2 2.5 Z' fill='#444'/></svg>
<svg class='abs' style='left:1362px;top:565.0px' width='13' height='13' viewBox='0 0 13 13'><path fill='#2b2b2b' fill-rule='evenodd' d='M5.3 0 H7.7 L8.1 1.8 L9.6 2.7 L11.4 2.1 L12.6 4.2 L11.2 5.4 V7.6 L12.6 8.8 L11.4 10.9 L9.6 10.3 L8.1 11.2 L7.7 13 H5.3 L4.9 11.2 L3.4 10.3 L1.6 10.9 L.4 8.8 L1.8 7.6 V5.4 L.4 4.2 L1.6 2.1 L3.4 2.7 L4.9 1.8 Z M6.5 4.1 A2.4 2.4 0 1 0 6.5 8.9 A2.4 2.4 0 1 0 6.5 4.1 Z'/></svg>
<svg class='abs' style='left:1382.5px;top:570.0px' width='4' height='3' viewBox='0 0 4 3'><path d='M0 0 H4 L2 2.5 Z' fill='#444'/></svg>
<svg class='abs' style='left:1362px;top:602.0px' width='13' height='13' viewBox='0 0 13 13'><path fill='#2b2b2b' fill-rule='evenodd' d='M5.3 0 H7.7 L8.1 1.8 L9.6 2.7 L11.4 2.1 L12.6 4.2 L11.2 5.4 V7.6 L12.6 8.8 L11.4 10.9 L9.6 10.3 L8.1 11.2 L7.7 13 H5.3 L4.9 11.2 L3.4 10.3 L1.6 10.9 L.4 8.8 L1.8 7.6 V5.4 L.4 4.2 L1.6 2.1 L3.4 2.7 L4.9 1.8 Z M6.5 4.1 A2.4 2.4 0 1 0 6.5 8.9 A2.4 2.4 0 1 0 6.5 4.1 Z'/></svg>
<svg class='abs' style='left:1382.5px;top:607.0px' width='4' height='3' viewBox='0 0 4 3'><path d='M0 0 H4 L2 2.5 Z' fill='#444'/></svg>
<svg class='abs' style='left:1362px;top:656.5px' width='13' height='13' viewBox='0 0 13 13'><path fill='#2b2b2b' fill-rule='evenodd' d='M5.3 0 H7.7 L8.1 1.8 L9.6 2.7 L11.4 2.1 L12.6 4.2 L11.2 5.4 V7.6 L12.6 8.8 L11.4 10.9 L9.6 10.3 L8.1 11.2 L7.7 13 H5.3 L4.9 11.2 L3.4 10.3 L1.6 10.9 L.4 8.8 L1.8 7.6 V5.4 L.4 4.2 L1.6 2.1 L3.4 2.7 L4.9 1.8 Z M6.5 4.1 A2.4 2.4 0 1 0 6.5 8.9 A2.4 2.4 0 1 0 6.5 4.1 Z'/></svg>
<svg class='abs' style='left:1382.5px;top:661.5px' width='4' height='3' viewBox='0 0 4 3'><path d='M0 0 H4 L2 2.5 Z' fill='#444'/></svg>
<svg class='abs' style='left:1362px;top:728.5px' width='13' height='13' viewBox='0 0 13 13'><path fill='#2b2b2b' fill-rule='evenodd' d='M5.3 0 H7.7 L8.1 1.8 L9.6 2.7 L11.4 2.1 L12.6 4.2 L11.2 5.4 V7.6 L12.6 8.8 L11.4 10.9 L9.6 10.3 L8.1 11.2 L7.7 13 H5.3 L4.9 11.2 L3.4 10.3 L1.6 10.9 L.4 8.8 L1.8 7.6 V5.4 L.4 4.2 L1.6 2.1 L3.4 2.7 L4.9 1.8 Z M6.5 4.1 A2.4 2.4 0 1 0 6.5 8.9 A2.4 2.4 0 1 0 6.5 4.1 Z'/></svg>
<svg class='abs' style='left:1382.5px;top:733.5px' width='4' height='3' viewBox='0 0 4 3'><path d='M0 0 H4 L2 2.5 Z' fill='#444'/></svg>
<svg class='abs' style='left:1362px;top:783.0px' width='13' height='13' viewBox='0 0 13 13'><path fill='#2b2b2b' fill-rule='evenodd' d='M5.3 0 H7.7 L8.1 1.8 L9.6 2.7 L11.4 2.1 L12.6 4.2 L11.2 5.4 V7.6 L12.6 8.8 L11.4 10.9 L9.6 10.3 L8.1 11.2 L7.7 13 H5.3 L4.9 11.2 L3.4 10.3 L1.6 10.9 L.4 8.8 L1.8 7.6 V5.4 L.4 4.2 L1.6 2.1 L3.4 2.7 L4.9 1.8 Z M6.5 4.1 A2.4 2.4 0 1 0 6.5 8.9 A2.4 2.4 0 1 0 6.5 4.1 Z'/></svg>
<svg class='abs' style='left:1382.5px;top:788.0px' width='4' height='3' viewBox='0 0 4 3'><path d='M0 0 H4 L2 2.5 Z' fill='#444'/></svg>
</div>
<div class='abs' style='left:19px;top:789px;width:1367px;height:8px;background:#eeeeee'></div>
<div class='abs' style='left:19px;top:789px;width:623px;height:8px;border-radius:4px;background:#009384'></div>
<div class='abs' style='left:19px;top:797px;width:1367px;height:1px;background:#e2e2e2'></div>
<div class='t' style='left:29px;top:815.3px;font-size:13.25px;color:#222;line-height:15px'>Số bản ghi / trang</div>
<div class='abs' style='left:138px;top:808px;width:74.5px;height:32px;border:1px solid #dcdcdc;border-bottom:none;border-radius:3px 3px 0 0;background:#fff'></div>
<div class='t' style='left:153px;top:816px;font-size:13px;color:#222;line-height:15px'>50</div>
<svg class='abs' style='left:199px;top:820px' width='10' height='7' viewBox='0 0 10 7'><path d='M1 1 L5 5 L9 1' fill='none' stroke='#222' stroke-width='1.8'/></svg>
<div class='abs' style='left:19px;top:839px;width:1367px;height:1px;background:#e4e4e4'></div>
<div class='abs' style='left:19px;top:840px;width:1367px;height:12.5px;background:#fafafa'></div>
<div class='abs' style='left:21px;top:843px;width:1380px;height:8px;border-radius:4px;background:#c1c1c1'></div>
<div class='abs' style='left:0;top:869px;width:293px;height:31px;background:#054f5f;border-radius:0 7px 0 0'></div>
<div class='t' style='left:6px;top:876px;font-size:14.2px;color:#b3bec1;line-height:16px;-webkit-text-stroke:.15px #b3bec1'>2021 © crm.bizfly.vn</div>
<div class='t' style='left:162.5px;top:876px;font-size:13.6px;color:#b3bec1;line-height:16px;-webkit-text-stroke:.15px #b3bec1'>Hỗ trợ, hướng dẫn</div>
<div id='side'></div>
<svg class='abs' style='left:1403px;top:231px' width='20' height='20' viewBox='0 0 20 20'><g fill='none' stroke='#4a7ef0' stroke-width='1.5'><path d='M6.3 5.7 H.7 V16.5 A2.5 2.5 0 0 0 3.2 19 H17 A2.5 2.5 0 0 0 19.5 16.2'/><path d='M9.3 5.7 H19.5 V13.3'/><path d='M6.3 5.9 V4.2 A3.7 3.7 0 0 1 13.7 4.2 V5.9'/></g><g fill='#6b93f2'><rect x='6' y='10.3' width='1.5' height='1.5'/><rect x='9.2' y='10.3' width='1.5' height='1.5'/><rect x='12.3' y='10.3' width='1.5' height='1.5'/><rect x='6' y='13.3' width='1.5' height='1.5'/><rect x='9.2' y='13.3' width='1.5' height='1.5'/><rect x='12.3' y='13.3' width='1.5' height='1.5'/></g></svg>
<svg class='abs' style='left:1404px;top:287px' width='18' height='20' viewBox='0 0 18 20'><defs><linearGradient id='hg' x1='0' x2='1' y1='0' y2='1'><stop offset='0' stop-color='#5a9f2a'/><stop offset='1' stop-color='#86bd3e'/></linearGradient></defs><path d='M9 0 L17.8 4.6 V15.2 L9 19.8 L.2 15.2 V4.6 Z' fill='url(#hg)'/><path d='M4.3 5.5 H12.5 M14 8.5 V15.5 H4.3' fill='none' stroke='#f2f8ec' stroke-width='1.1'/><rect x='7' y='6.2' width='6' height='8.4' fill='#4f9a24'/><path d='M8.2 9.6 L10 11.4 L14.5 6.2' fill='none' stroke='#fff' stroke-width='1.3'/><path d='M3 7.5 H5.5 M3 10.5 H5.5 M3 13.5 H5.5' stroke='#f2f8ec' stroke-width='1'/><path d='M5.8 5.5 V15.5' stroke='#f2f8ec' stroke-width='.8'/></svg>
<svg class='abs' style='left:1403px;top:343px' width='20' height='20' viewBox='0 0 20 20'><rect width='20' height='20' fill='#2e465d'/><rect x='6.5' y='3' width='6.7' height='12' fill='#8fd0f0'/><rect x='6.5' y='3' width='6.7' height='1' fill='#e6eef2'/><rect x='6.5' y='13.3' width='6.7' height='1.7' fill='#e8eef2'/><rect x='2.2' y='5.7' width='5.8' height='3.3' fill='#eef2f4'/><rect x='10.8' y='6' width='6.5' height='3' fill='#f4dcd6'/><rect x='11.8' y='6.8' width='4.6' height='1.2' fill='#e46a5c'/><rect x='5' y='17.5' width='10' height='.6' fill='#5d7287'/></svg>
<svg class='abs' style='left:1404.5px;top:400.5px' width='17' height='17' viewBox='0 0 17 17'><path d='M8.5 8.5 L8.5 0 A8.5 8.5 0 0 0 0 8.5 Z' fill='#3b8fd0'/><path d='M8.5 8.5 L17 8.5 A8.5 8.5 0 0 0 8.5 0 Z' fill='#53b344'/><path d='M8.5 8.5 L8.5 17 A8.5 8.5 0 0 0 17 8.5 Z' fill='#e98531'/><path d='M8.5 8.5 L0 8.5 A8.5 8.5 0 0 0 8.5 17 Z' fill='#d9403a'/><circle cx='8.5' cy='8.5' r='3.6' fill='#fff'/><rect x='6.2' y='7.8' width='4.6' height='1.4' fill='#666'/></svg>
<div class='abs' style='left:1401px;top:455px;width:24px;height:1px;background:#c8c8c8'></div>
<svg class='abs' style='left:1406px;top:484px' width='14' height='14' viewBox='0 0 14 14'><path d='M7 0 V14 M0 7 H14' stroke='#5a5a5a' stroke-width='1.5'/></svg>
<svg class='abs' style='left:1405px;top:818px' width='17' height='17' viewBox='0 0 17 17'><path d='M14.3 10 A6.2 6.2 0 1 1 12.6 4' fill='none' stroke='#5f5f5f' stroke-width='1.8'/><path d='M10.2 6.2 L15.8 .8 V6.2 Z' fill='#5f5f5f'/></svg>
<svg class='abs' style='left:1409.5px;top:860px' width='8' height='12' viewBox='0 0 8 12'><path d='M1 1 L6.5 6 L1 11' fill='none' stroke='#5f5f5f' stroke-width='1.6'/></svg>
</body></html>
